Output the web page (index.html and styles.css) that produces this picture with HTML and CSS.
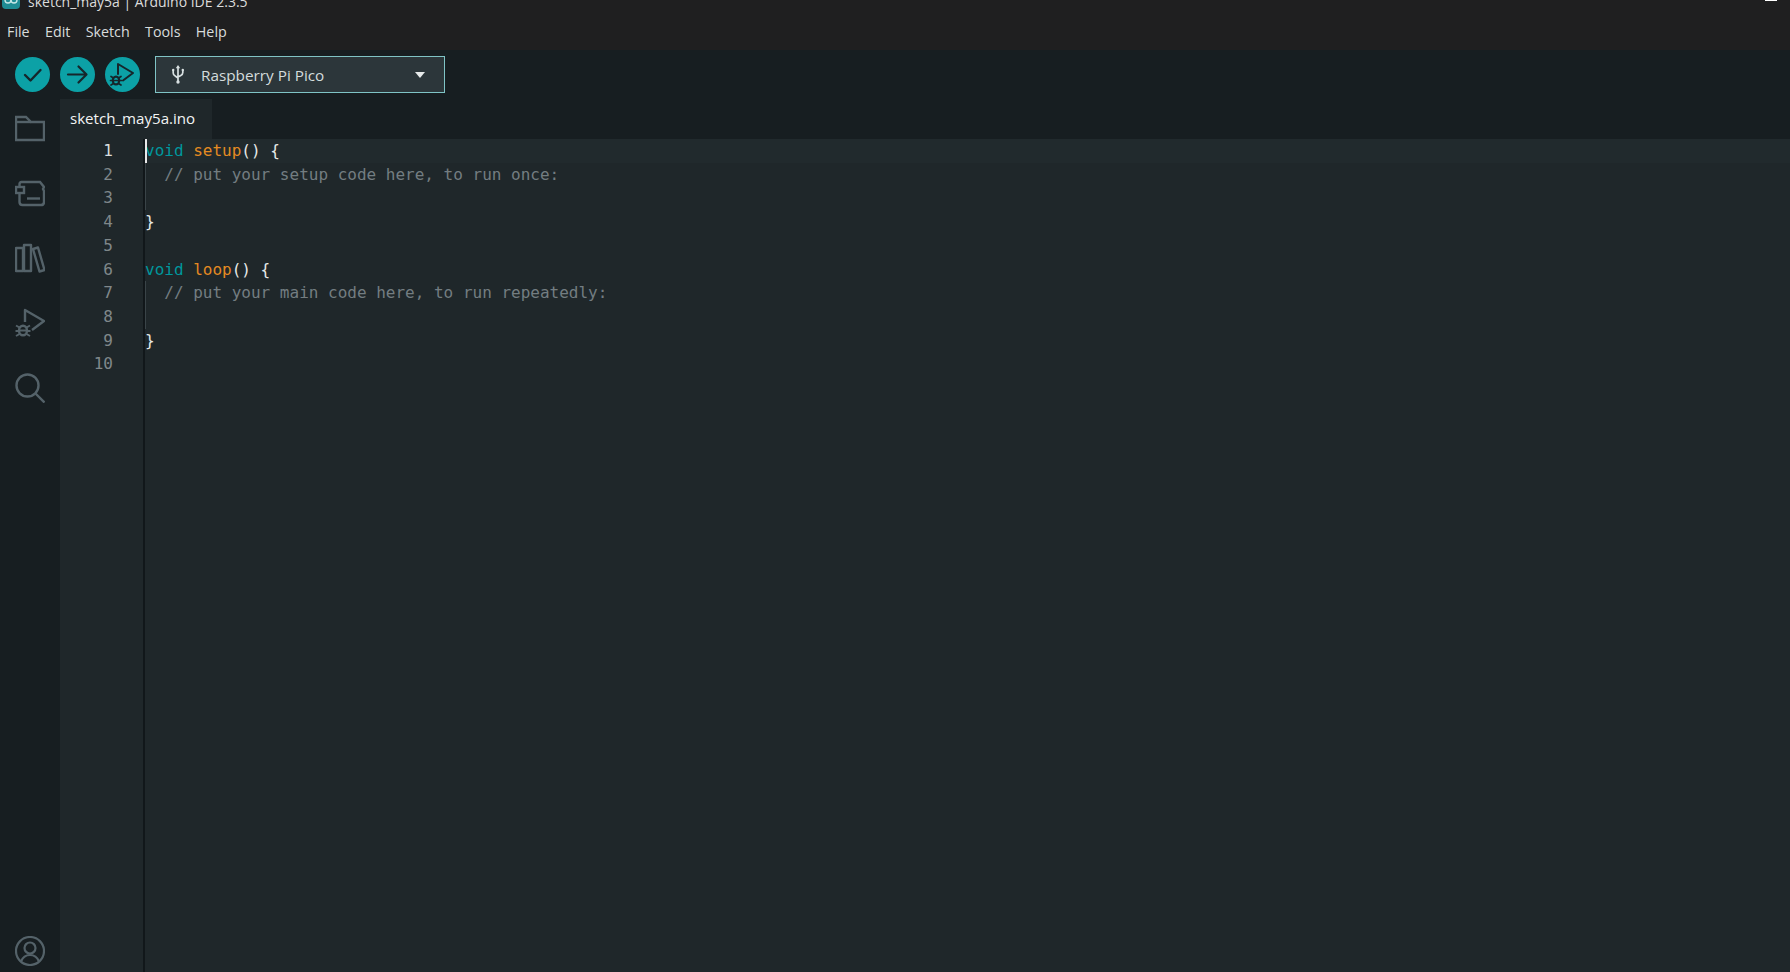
FILE: index.html
```html
<!DOCTYPE html>
<html lang="en">
<head>
<meta charset="utf-8">
<title>sketch_may5a | Arduino IDE 2.3.5</title>
<link rel="stylesheet" href="styles.css">
</head>
<body>
<div class="app">
  <header class="titlebar">
    <svg class="logo" width="18" height="18" viewBox="0 0 18 18"><rect width="18" height="18" rx="4" fill="#1f8c94"/><g fill="none" stroke="#c4e6e6" stroke-width="1.4"><circle cx="6" cy="9" r="3"/><circle cx="12" cy="9" r="3"/></g></svg>
    <span class="title">sketch_may5a | Arduino IDE 2.3.5</span>
    <span class="minimize"></span>
  </header>
  <nav class="menubar">
    <span>File</span><span>Edit</span><span>Sketch</span><span>Tools</span><span>Help</span>
  </nav>
  <section class="toolbar">
    <button class="round" aria-label="Verify"><svg width="35" height="35" viewBox="0 0 35 35"><path d="M10 18l5.500 5.500L25.500 13" fill="none" stroke="#16262b" stroke-width="2.400" stroke-linecap="round" stroke-linejoin="round"/></svg></button>
    <button class="round" aria-label="Upload"><svg width="35" height="35" viewBox="0 0 35 35"><path d="M8 17.500h18M18.500 9.500l8 8-8 8" fill="none" stroke="#16262b" stroke-width="2.200" stroke-linecap="round" stroke-linejoin="round"/></svg></button>
    <button class="round" aria-label="Debug"><svg width="35" height="35" viewBox="0 0 35 35"><g fill="none" stroke="#16262b" stroke-linejoin="round" stroke-linecap="round"><path d="M13 17V7l15 9-10 7.500" stroke-width="2"/><ellipse cx="11" cy="23.500" rx="3.200" ry="3.800" stroke-width="2.200"/><path d="M6 19.500l2.500 1.500M16 19.500l-2.500 1.500M5.500 23.500h2.500M14 23.500h2.500M6 28l2.500-1.500M16 28l-2.500-1.500M8 23.500h6" stroke-width="1.700"/></g></svg></button>
    <div class="board">
      <svg class="usb" width="12" height="19" viewBox="0 0 12 19"><g fill="none" stroke="#d8e0e1" stroke-width="1.700" stroke-linecap="round"><path d="M6 2v14M1.200 5.500V8q0 2 2 3L6 13M10.800 5.500V7.500q0 2-2 3L6 12"/></g><path d="M6 0l2.200 3.200H3.800z" fill="#d8e0e1"/><circle cx="6" cy="17" r="1.700" fill="#d8e0e1"/><circle cx="1.200" cy="5" r="1.200" fill="#d8e0e1"/><circle cx="10.800" cy="5" r="1.200" fill="#d8e0e1"/></svg>
      <span class="board-name">Raspberry Pi Pico</span>
      <span class="caret"></span>
    </div>
  </section>
  <div class="main">
    <aside class="activity">
      <svg class="act" width="30" height="30" viewBox="0 0 30 30"><g fill="none" stroke="#546269" stroke-width="2.400"><path d="M1 27V4h10l5 5h13v18z"/><path d="M1 9h15"/></g></svg>
      <svg class="act" width="30" height="30" viewBox="0 0 30 30"><g fill="none" stroke="#546269" stroke-width="2.400"><path d="M4.500 8V6q0-2 2-2H25l4 5-1 2 1 2v11q0 3-3 3H7.500q-3 0-3-3v-9"/><rect x="1" y="9" width="8" height="6"/><path d="M12 20.500h13"/></g></svg>
      <svg class="act" width="30" height="30" viewBox="0 0 30 30"><g fill="none" stroke="#546269" stroke-width="2.400" stroke-linejoin="round"><path d="M1 5h7v23H1z"/><path d="M9 2h7v26H9z"/><path d="M18 6l5-1.500 6.500 22.500-5 1.500z"/></g></svg>
      <svg class="act" width="30" height="30" viewBox="0 0 30 30"><g fill="none" stroke="#546269" stroke-linejoin="round"><path d="M10 14V2l19 11-12 9" stroke-width="2.400"/><ellipse cx="8" cy="22.500" rx="4" ry="4.800" stroke-width="2.400"/><path d="M3 22.500h10M1 17.500l3.500 2M15 17.500l-3.500 2M.500 23h3M12.500 23h3M1 28l3.500-2M15 28l-3.500-2" stroke-width="2"/></g></svg>
      <svg class="act" width="30" height="30" viewBox="0 0 30 30"><g fill="none" stroke="#546269" stroke-width="2.400"><circle cx="12.500" cy="12.500" r="11"/><path d="M20.500 20.500l9 9"/></g></svg>
      <svg class="act account" width="30" height="30" viewBox="0 0 30 30"><g fill="none" stroke="#546269" stroke-width="2.200"><circle cx="15" cy="15" r="14"/><circle cx="15" cy="12" r="5.500"/><path d="M6 25.500c2-5 5.500-6.500 9-6.500s7 1.500 9 6.500"/></g></svg>
    </aside>
    <div class="workspace">
      <div class="tabs"><div class="tab">sketch_may5a.ino</div></div>
      <div class="editor">
        <div class="gutter">
          <div class="num active">1</div><div class="num">2</div><div class="num">3</div><div class="num">4</div><div class="num">5</div><div class="num">6</div><div class="num">7</div><div class="num">8</div><div class="num">9</div><div class="num">10</div>
        </div>
        <div class="code">
          <div class="line current"><span class="cursor"></span><span class="kw">void</span> <span class="fn">setup</span>() {</div>
          <div class="line guide"><span class="cm">  // put your setup code here, to run once:</span></div>
          <div class="line guide"></div>
          <div class="line">}</div>
          <div class="line"></div>
          <div class="line"><span class="kw">void</span> <span class="fn">loop</span>() {</div>
          <div class="line guide"><span class="cm">  // put your main code here, to run repeatedly:</span></div>
          <div class="line guide"></div>
          <div class="line">}</div>
          <div class="line"></div>
        </div>
      </div>
    </div>
  </div>
</div>
</body>
</html>
```

FILE: styles.css
```css
* { box-sizing: border-box; }
html, body { margin: 0; height: 100%; overflow: hidden; background: #1f272a; }
.app { display: flex; flex-direction: column; height: 972px; font-family: "Open Sans", "Noto Sans", sans-serif; }

.titlebar { position: relative; display: flex; align-items: center; height: 6px; background: #1f1f20; color: #dcdcdc; font-size: 14px; padding-left: 2px; }
.logo { flex: none; margin: -6px 8px 0 0; }
.title { white-space: nowrap; line-height: 6px; margin-top: -2px; }
.minimize { position: absolute; top: 0; left: 1765px; width: 12px; height: 1px; background: #fff; }

.menubar { display: flex; align-items: center; gap: 15.300px; height: 44px; padding: 7px 0 0 7px; background: #1f1f20; color: #d8dcdc; font-size: 14.300px; }

.toolbar { display: flex; align-items: center; height: 49px; padding: 0 0 0 15px; background: #171e21; }
.round { display: block; width: 35px; height: 35px; margin: 0 10px 0 0; padding: 0; border: 0; border-radius: 50%; background: #0ca1a6; }
.round svg { display: block; }
.board { display: flex; align-items: center; width: 290px; height: 37px; margin-left: 5px; border: 1px solid #7fc4c6; background: #2c363a; color: #d4dcdd; font-size: 15.300px; }
.usb { margin-left: 16px; flex: none; }
.board-name { margin-left: 17px; flex: 1; }
.caret { width: 0; height: 0; margin-right: 19px; border-left: 5.500px solid transparent; border-right: 5.500px solid transparent; border-top: 6px solid #e6eaea; }

.main { flex: 1; display: flex; min-height: 0; }
.activity { flex: none; width: 60px; display: flex; flex-direction: column; align-items: center; padding-top: 14px; background: #171e21; }
.act { display: block; flex: none; margin-bottom: 35px; }
.account { margin-top: auto; margin-bottom: 6px; }

.workspace { flex: 1; display: flex; flex-direction: column; min-width: 0; }
.tabs { height: 40px; background: #171e21; }
.tab { width: 152px; height: 40px; padding-left: 10px; line-height: 39px; background: #1f272a; color: #f2f4f4; font-size: 15.100px; }

.editor { flex: 1; display: flex; background: #1f272a; font-family: "DejaVu Sans Mono", monospace; font-size: 16px; }
.gutter { flex: none; width: 85px; border-right: 2px solid #11171a; padding-right: 30px; text-align: right; color: #7f878a; }
.num { height: 23.720px; line-height: 23.720px; }
.num.active { color: #d9dddd; }
.code { flex: 1; color: #e6e9e8; }
.line { position: relative; height: 23.720px; line-height: 23.720px; white-space: pre; }
.current { background: #212a2d; }
.guide::before { content: ""; position: absolute; left: 0; top: 0; bottom: 0; width: 1px; background: #3a4448; }
.cursor { position: absolute; left: 0; top: 0; width: 2px; height: 23.720px; background: #e8e8e8; }
.kw { color: #00979d; }
.fn { color: #e48a22; }
.cm { color: #737d81; }
```
